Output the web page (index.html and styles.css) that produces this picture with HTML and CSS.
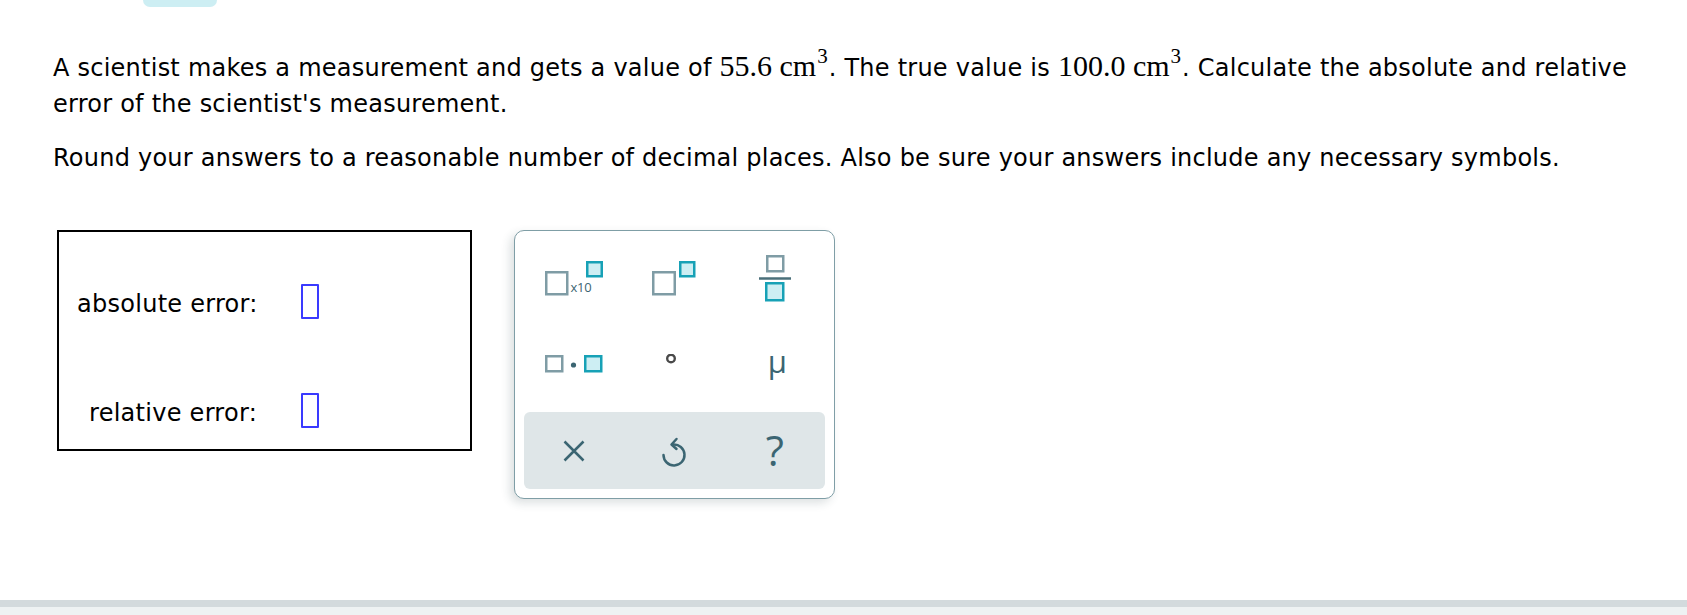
FILE: index.html
```html
<!DOCTYPE html>
<html lang="en">
<head>
<meta charset="utf-8">
<title>Absolute and relative error</title>
<link rel="stylesheet" href="styles.css">
</head>
<body>
<div class="page">
  <div class="tab-stub"></div>

  <div class="question">
    <p>A scientist makes a measurement and gets a value of <span class="math">55.6&nbsp;cm<sup class="sup">3</sup></span>. The true value is <span class="math">100.0&nbsp;cm<sup class="sup">3</sup></span>. Calculate the absolute and relative error of the scientist's measurement.</p>
    <p>Round your answers to a reasonable number of decimal places. Also be sure your answers include any necessary symbols.</p>
  </div>

  <div class="work">
    <div class="answers">
      <span class="label">absolute error:</span>
      <span class="blank"></span>
      <span class="label">relative error:</span>
      <span class="blank"></span>
    </div>

    <div class="keypad">
      <div class="keys">
        <button class="key" title="scientific notation">
          <svg width="58" height="35" viewBox="0 0 58 35">
            <rect x="1.25" y="11.25" width="21" height="22" fill="#fff" stroke="#7f9ca5" stroke-width="2.5"/>
            <rect x="42.25" y="1.25" width="14.5" height="14" fill="#cdeef3" stroke="#17a1b6" stroke-width="2.5"/>
            <text class="x10" x="25.5" y="31">x10</text>
          </svg>
        </button>
        <button class="key" title="power">
          <svg width="44" height="35" viewBox="0 0 44 35">
            <rect x="1.25" y="11.25" width="21.5" height="22" fill="#fff" stroke="#7f9ca5" stroke-width="2.5"/>
            <rect x="28.25" y="1.25" width="14" height="14" fill="#cdeef3" stroke="#17a1b6" stroke-width="2.5"/>
          </svg>
        </button>
        <button class="key" title="fraction">
          <svg width="32" height="47" viewBox="0 0 32 47">
            <rect x="8.25" y="1.25" width="16" height="15" fill="#fff" stroke="#7f9ca5" stroke-width="2.5"/>
            <line x1="0" y1="23.5" x2="32" y2="23.5" stroke="#4a6f7a" stroke-width="2.5"/>
            <rect x="7.25" y="28.25" width="17" height="17" fill="#cdeef3" stroke="#17a1b6" stroke-width="2.5"/>
          </svg>
        </button>
        <button class="key" title="multiply">
          <svg width="58" height="18" viewBox="0 0 58 18">
            <rect x="1.25" y="1.25" width="16" height="15" fill="#fff" stroke="#7f9ca5" stroke-width="2.5"/>
            <circle cx="28.5" cy="10" r="2.6" fill="#3b6572"/>
            <rect x="40.25" y="1.25" width="16" height="15" fill="#cdeef3" stroke="#17a1b6" stroke-width="2.5"/>
          </svg>
        </button>
        <button class="key" title="degree">
          <svg width="20" height="20" viewBox="0 0 20 20">
            <circle cx="7" cy="4.5" r="3.8" fill="none" stroke="#4a4a4a" stroke-width="2.4"/>
          </svg>
        </button>
        <button class="key key-text" title="micro">μ</button>
      </div>
      <div class="actions">
        <button class="key" title="clear">
          <svg width="22" height="22" viewBox="0 0 22 22">
            <path d="M1.5 1.5 L20.5 20.5 M20.5 1.5 L1.5 20.5" stroke="#3b6572" stroke-width="2.5" fill="none"/>
          </svg>
        </button>
        <button class="key" title="undo">
          <svg width="26" height="32" viewBox="0 0 26 32">
            <path d="M2.5 20 A10.5 10.5 0 1 0 12 9.5" stroke="#3b6572" stroke-width="2.5" fill="none" stroke-linecap="round"/>
            <path d="M15.5 4 L10.5 9.5 L15.5 14" stroke="#3b6572" stroke-width="2.5" fill="none" stroke-linecap="round" stroke-linejoin="round"/>
          </svg>
        </button>
        <button class="key key-help" title="help">?</button>
      </div>
    </div>
  </div>

  <div class="footer"></div>
</div>
</body>
</html>
```

FILE: styles.css
```css
html, body {
  margin: 0;
  padding: 0;
  background: #fff;
}

body {
  font-family: "DejaVu Sans", Verdana, sans-serif;
  color: #000;
}

.page {
  height: 615px;
  display: flex;
  flex-direction: column;
  overflow: hidden;
}

.tab-stub {
  margin-left: 143px;
  width: 74px;
  height: 7px;
  background: #cdeef3;
  border-radius: 0 0 8px 8px;
  flex: none;
}

.question {
  margin: 43px 22px 0 53px;
  font-size: 24px;
  line-height: 36px;
  letter-spacing: 0.24px;
}

.question p {
  margin: 0;
}

.question p + p {
  margin-top: 18px;
}

.math {
  font-family: "Liberation Serif", "Times New Roman", serif;
  font-size: 30px;
  line-height: 28px;
  letter-spacing: 0;
}

.sup {
  font-size: 21px;
  line-height: 0;
  vertical-align: 13px;
  margin-left: 1px;
  margin-right: 1px;
}

.work {
  display: flex;
  align-items: flex-start;
  gap: 42px;
  margin: 54px 0 0 57px;
}

.answers {
  box-sizing: border-box;
  width: 415px;
  height: 221px;
  border: 2px solid #000;
  padding: 52px 0 21px 18px;
  display: grid;
  grid-template-columns: 180px 18px;
  grid-template-rows: 35px 35px;
  column-gap: 44px;
  row-gap: 74px;
  font-size: 24px;
  letter-spacing: 0.27px;
}

.label {
  align-self: end;
  text-align: right;
  line-height: 30px;
  white-space: nowrap;
}

.blank {
  box-sizing: border-box;
  width: 18px;
  height: 35px;
  border: 2px solid #3a3aff;
  border-radius: 1px;
}

.keypad {
  box-sizing: border-box;
  width: 321px;
  height: 269px;
  border: 1px solid #7f9ea6;
  border-radius: 10px;
  padding: 5px 9px 9px;
  background: #fff;
  box-shadow: -4px 4px 10px rgba(40, 60, 70, 0.16);
}

.keys {
  display: grid;
  grid-template-columns: repeat(3, 1fr);
  grid-template-rows: 85px 85px;
}

.key {
  display: flex;
  align-items: center;
  justify-content: center;
  background: none;
  border: 0;
  padding: 0;
  margin: 0;
  font: inherit;
  cursor: pointer;
}

.key svg {
  display: block;
}

.x10 {
  font-family: "Open Sans", "Liberation Sans", sans-serif;
  font-size: 13px;
  fill: #3b6572;
  letter-spacing: -0.3px;
}

.key-text {
  font-family: "Open Sans", "Liberation Sans", sans-serif;
  font-weight: 400;
  font-size: 31px;
  line-height: 1;
  color: #3b6572;
  padding-left: 5px;
  padding-bottom: 4px;
}

.actions {
  margin-top: 6px;
  height: 77px;
  background: #dfe6e8;
  border-radius: 6px;
  display: grid;
  grid-template-columns: repeat(3, 1fr);
}

.key-help {
  font-family: "Open Sans", "Liberation Sans", sans-serif;
  font-weight: 400;
  font-size: 42px;
  line-height: 1;
  color: #3b6572;
  padding-bottom: 2px;
}

.footer {
  margin-top: auto;
  flex: none;
  height: 8px;
  border-top: 7px solid #d3dadd;
  background: #eef2f3;
}
```
